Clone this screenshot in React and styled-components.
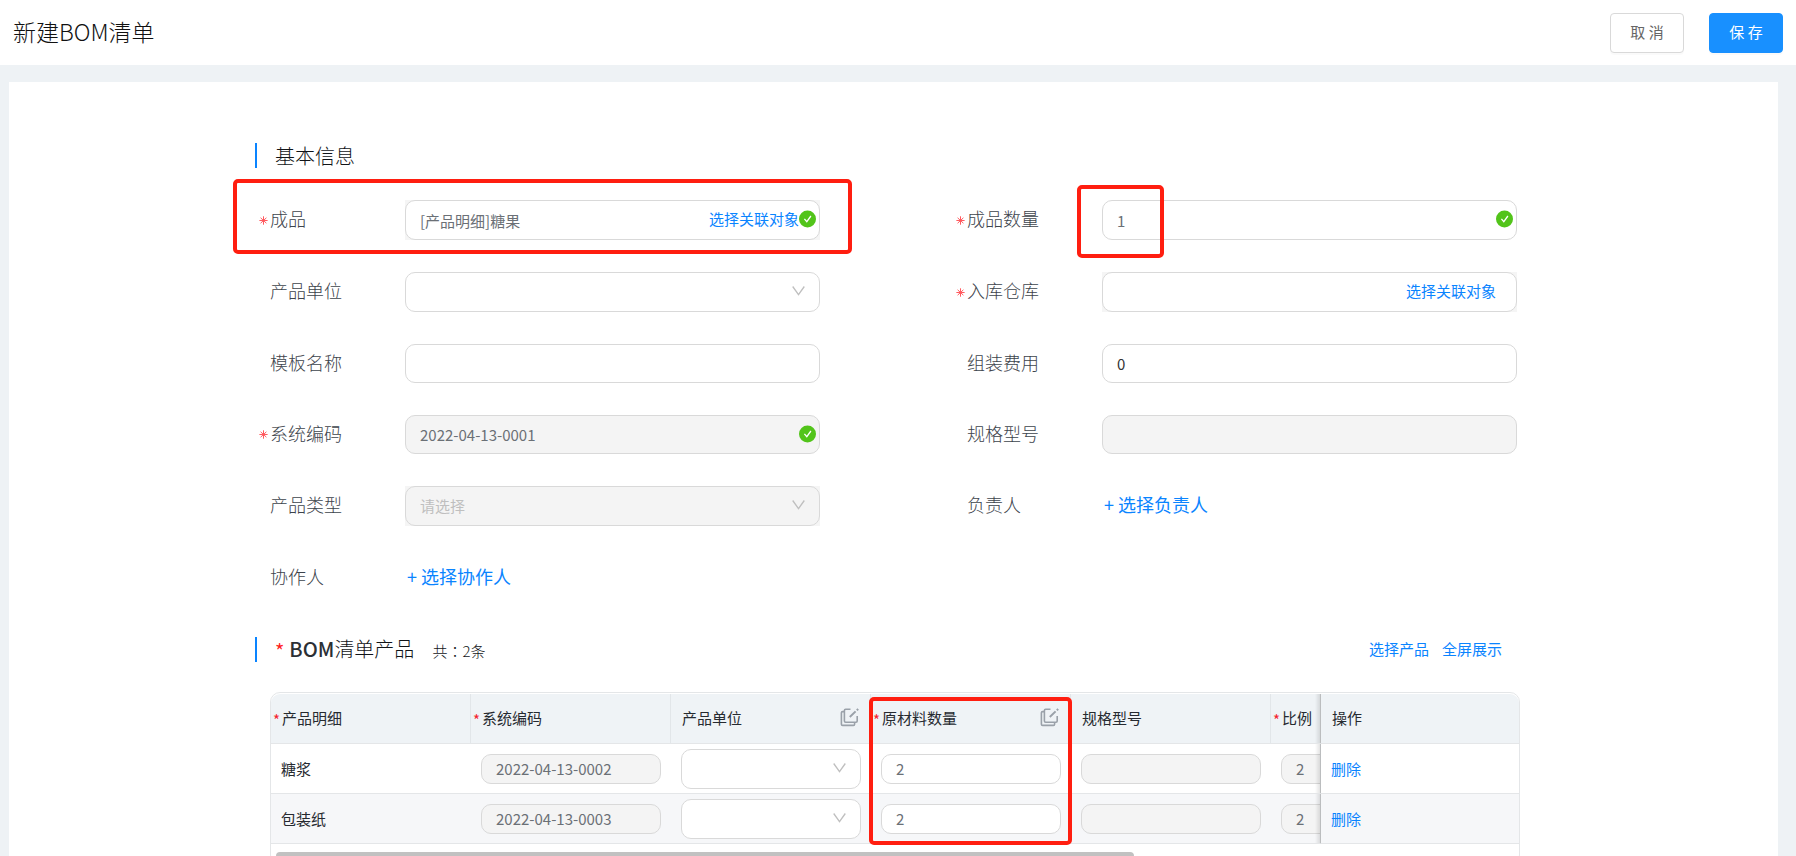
import React from 'react';
import styled, { createGlobalStyle } from 'styled-components';

const GlobalStyle = createGlobalStyle`
  *, *::before, *::after {
    box-sizing: border-box;
  }
  body {
    margin: 0;
    font-family: "Noto Sans CJK SC", sans-serif;
    font-weight: 400;
    font-size: 15px;
    color: #262a30;
  }
  button, input, select {
    font: inherit;
  }
`;

const Page = styled.div`
  height: 100vh;
  display: flex;
  flex-direction: column;
  background: #eef2f5;
`;

const TopBar = styled.header`
  flex: none;
  height: 65px;
  padding: 0 13px;
  display: flex;
  align-items: center;
  justify-content: space-between;
  background: #fff;
`;

const PageTitle = styled.h1`
  margin: 0;
  padding-bottom: 3px;
  font-size: 23px;
  font-weight: 300;
  color: #111;
`;

const Actions = styled.div`
  display: flex;
  gap: 25px;
`;

const Button = styled.button`
  width: 74px;
  height: 40px;
  padding: 0 0 2px;
  border: 1px solid ${props => (props.$primary ? '#1890ff' : '#d9d9d9')};
  border-radius: 4px;
  background: ${props => (props.$primary ? '#1890ff' : '#fff')};
  color: ${props => (props.$primary ? '#fff' : '#666')};
  box-shadow: 0 2px 0 rgba(0, 0, 0, 0.02);
  cursor: pointer;
`;

const Scroller = styled.main`
  flex: 1;
  min-height: 0;
  overflow-y: auto;
  scrollbar-width: none;
  padding: 17px 18px 0 9px;
`;

const Card = styled.div`
  padding: 61px 24px 40px;
  background: #fff;
`;

const Form = styled.form`
  max-width: 1277px;
  margin: 0 auto;
`;

const SectionHead = styled.div`
  height: 25px;
  padding: 0 18px;
  border-left: 2px solid #0a84ff;
  display: flex;
  align-items: center;
  justify-content: space-between;
`;

const SectionTitle = styled.h2`
  margin: 0;
  font-size: 20px;
  font-weight: 300;
  line-height: 25px;
  color: #111418;
`;

const Strong = styled.span`
  font-weight: 500;
  color: #2b2f35;
`;

const Count = styled.span`
  margin-left: 18px;
  font-size: 15px;
`;

// the TC face centres the full-width colon
const Colon = styled.span`
  font-family: "Noto Sans CJK TC", sans-serif;
`;

const HeadStar = styled.span`
  margin-right: 5px;
  vertical-align: -2px;
  font-weight: 400;
  color: #ff1f1f;
`;

const Links = styled.div`
  display: flex;
  gap: 13px;
  padding: 0 12px 2px 0;
`;

const Link = styled.a`
  color: #0a84ff;
  text-decoration: none;
`;

const AddLink = styled(Link)`
  padding: 0 0 4px 2px;
  font-size: 18px;
`;

const Fields = styled.div`
  display: grid;
  grid-template-columns: 1fr 1fr;
  gap: 32px 147px;
  margin: 32px 15px 39px;
`;

const Field = styled.div`
  position: relative;
  display: grid;
  grid-template-columns: 135px 1fr;
  align-items: center;
`;

const Label = styled.label`
  position: relative;
  padding-bottom: 4px;
  font-size: 18px;
  font-weight: 300;
  line-height: 26px;
  color: #3d444c;
`;

const LabelStar = styled.span`
  position: absolute;
  right: 100%;
  top: 2px;
  height: 26px;
  margin-right: 2px;
  display: flex;
  align-items: center;
`;

const Control = styled.div`
  position: relative;
  display: flex;
  align-items: center;
  min-height: ${props => (props.$tall ? 40 : 39)}px;
  background: ${props => (props.$backed ? '#f5f5f5' : 'transparent')};
`;

const TextBox = styled.input`
  width: 100%;
  height: ${props => (props.$small ? 30 : props.$tall ? 40 : 39)}px;
  padding: 0 14px;
  border: 1px solid #d9d9d9;
  border-radius: 10px;
  background: ${props => (props.disabled ? '#f4f4f4' : '#fff')};
  color: ${props => (props.$dark ? '#333' : '#6b7076')};
  outline: none;
`;

const SelectBox = styled.select`
  width: 100%;
  height: 40px;
  padding: 0 14px 2px;
  appearance: none;
  border: 1px solid #d9d9d9;
  border-radius: 10px;
  background: ${props => (props.disabled ? '#f4f4f4' : '#fff')};
  color: #bfbfbf;
  opacity: 1;
  outline: none;
`;

const ChevronSvg = styled.svg`
  position: absolute;
  right: 15px;
  top: 50%;
  margin-top: -6px;
  pointer-events: none;
`;

const PickLink = styled(Link)`
  position: absolute;
  right: 21px;
  padding-bottom: 4px;
`;

const CheckSvg = styled.svg`
  position: absolute;
  right: 4px;
  top: 10px;
`;

// red callout frames
const Mark = styled.div`
  position: absolute;
  border: 4px solid #ff1e10;
  border-radius: 5px;
  pointer-events: none;
  z-index: 3;
`;

const ProductMark = styled(Mark)`
  inset: -21px -32px -14px -37px;
`;

const AmountMark = styled(Mark)`
  left: 110px;
  top: -15px;
  width: 87px;
  height: 73px;
`;

const MaterialMark = styled(Mark)`
  left: 598px;
  top: 4px;
  width: 203px;
  height: 148px;
`;

const TableFrame = styled.div`
  position: relative;
  margin: 30px 12px 0 15px;
  padding-top: 1px;
  border: 1px solid #e4e6e8;
  border-radius: 10px;
`;

const TableScroll = styled.div`
  overflow-x: auto;
  scrollbar-width: none;
  border-radius: 9px 9px 0 0;
`;

const Table = styled.table`
  width: 1399px;
  table-layout: fixed;
  border-collapse: separate;
  border-spacing: 0;
`;

const HeadCell = styled.th`
  position: relative;
  width: ${props => (props.$last ? 199 : 200)}px;
  height: 50px;
  padding: 0 10px 2px 11px;
  border-right: 1px solid #e2e6e9;
  border-bottom: 1px solid #e4e6e8;
  background: #eff3f6;
  font-weight: 400;
  text-align: left;
`;

const CellStar = styled.span`
  position: absolute;
  left: 2px;
  margin-top: 2px;
  color: #f5222d;
`;

const EditSvg = styled.svg`
  position: absolute;
  right: 11px;
  top: 14px;
`;

const Row = styled.tr`
  background: ${props => (props.$striped ? '#f6f7f9' : '#fff')};
`;

const Cell = styled.td`
  height: 50px;
  padding: 0 10px;
  border-bottom: 1px solid #e4e6e8;
  background: inherit;
`;

const pinned = `
  position: sticky;
  right: 0;
  z-index: 2;
  border-right: 0;
  border-left: 1px solid #d4d6d8;

  &::before {
    content: '';
    position: absolute;
    top: 0;
    bottom: 0;
    right: 100%;
    width: 6px;
    background: linear-gradient(to right, rgba(0, 0, 0, 0), rgba(0, 0, 0, 0.13));
  }
`;

const PinnedHead = styled(HeadCell)`${pinned}`;
const PinnedCell = styled(Cell)`${pinned}`;

const ScrollTrack = styled.div`
  padding: 8px 5px 4px;
`;

const ScrollThumb = styled.div`
  width: 858px;
  max-width: 100%;
  height: 8px;
  border-radius: 4px;
  background: #c1c1c1;
`;

const Chevron = () => (
  <ChevronSvg width="13" height="10" viewBox="0 0 13 10" fill="none" stroke="#bfbfbf" strokeWidth="1.3">
    <path d="M0.7 0.5 L6.5 8.6 L12.3 0.5" />
  </ChevronSvg>
);

const Check = () => (
  <CheckSvg width="17" height="18" viewBox="0 0 17 18">
    <circle cx="8.5" cy="9" r="8.5" fill="#52c41a" />
    <path d="M5.4 8.8 L7.8 11.6 L11.9 6" fill="none" stroke="#fff" strokeWidth="1.3" />
  </CheckSvg>
);

const Star = () => (
  <LabelStar>
    <svg width="9" height="9" viewBox="0 0 9 9" stroke="#ff5a5f" strokeWidth="1">
      <path d="M4.5 0.3 V8.7 M0.4 4.5 H8.6 M1.6 1.8 L7.4 7.2 M7.4 1.8 L1.6 7.2" />
    </svg>
  </LabelStar>
);

const EditAll = () => (
  <EditSvg width="19" height="19" viewBox="0 0 19 19" fill="none" stroke="#9aa1a9" strokeWidth="1.6">
    <path d="M10.5 1.2 H5.6 Q4.4 1.2 4.4 2.4 V13 Q4.4 14.2 5.6 14.2 H16 Q17.2 14.2 17.2 13 V8" />
    <path d="M4.4 3.6 H2.6 Q1.4 3.6 1.4 4.8 V16.2 Q1.4 17.4 2.6 17.4 H13.4 Q14.6 17.4 14.6 16.2 V14.4" />
    <path d="M9.8 9 L15.6 3.4 M16.8 2.3 L18.2 1" strokeWidth="2" />
  </EditSvg>
);

const fields = [
  { id: 'product', label: '成品', required: true, value: '[产品明细]糖果', pick: true, valid: true, tall: true, mark: ProductMark },
  { id: 'amount', label: '成品数量', required: true, value: '1', valid: true, tall: true, mark: AmountMark },
  { id: 'unit', label: '产品单位', type: 'select' },
  { id: 'warehouse', label: '入库仓库', required: true, value: '', pick: true, tall: true },
  { id: 'template', label: '模板名称', value: '' },
  { id: 'cost', label: '组装费用', value: '0', dark: true },
  { id: 'code', label: '系统编码', required: true, value: '2022-04-13-0001', disabled: true, valid: true },
  { id: 'spec', label: '规格型号', value: '', disabled: true },
  { id: 'category', label: '产品类型', type: 'select', disabled: true, placeholder: '请选择' },
  { id: 'owner', label: '负责人', type: 'link', text: '+ 选择负责人' },
  { id: 'partner', label: '协作人', type: 'link', text: '+ 选择协作人' },
];

const columns = [
  { title: '产品明细', required: true },
  { title: '系统编码', required: true },
  { title: '产品单位', edit: true },
  { title: '原材料数量', required: true, edit: true },
  { title: '规格型号' },
  { title: '比例', required: true },
];

const rows = [
  { name: '糖浆', code: '2022-04-13-0002', amount: '2', ratio: '2' },
  { name: '包装纸', code: '2022-04-13-0003', amount: '2', ratio: '2' },
];

const FormField = ({ field }) => {
  const { id, label, type, required, mark: MarkFrame } = field;

  return (
    <Field>
      <Label htmlFor={id}>
        {required && <Star />}
        {label}
      </Label>
      {type === 'link' && (
        <Control $tall>
          <AddLink id={id} href="#">{field.text}</AddLink>
        </Control>
      )}
      {type === 'select' && (
        <Control $tall $backed={field.disabled}>
          <SelectBox id={id} disabled={field.disabled}>
            <option>{field.placeholder}</option>
          </SelectBox>
          <Chevron />
        </Control>
      )}
      {!type && (
        <Control $tall={field.tall} $backed={field.pick}>
          <TextBox id={id} defaultValue={field.value} disabled={field.disabled} $tall={field.tall} $dark={field.dark} />
          {field.pick && <PickLink href="#">选择关联对象</PickLink>}
          {field.valid && <Check />}
        </Control>
      )}
      {MarkFrame && <MarkFrame />}
    </Field>
  );
};

const ProductTable = () => (
  <TableFrame>
    <TableScroll>
      <Table>
        <thead>
          <tr>
            {columns.map(column => (
              <HeadCell key={column.title}>
                {column.required && <CellStar>*</CellStar>}
                {column.title}
                {column.edit && <EditAll />}
              </HeadCell>
            ))}
            <PinnedHead $last>操作</PinnedHead>
          </tr>
        </thead>
        <tbody>
          {rows.map((row, i) => (
            <Row key={row.code} $striped={i % 2 === 1}>
              <Cell>{row.name}</Cell>
              <Cell><TextBox $small disabled aria-label="系统编码" defaultValue={row.code} /></Cell>
              <Cell>
                <Control $tall>
                  <SelectBox aria-label="产品单位"><option></option></SelectBox>
                  <Chevron />
                </Control>
              </Cell>
              <Cell><TextBox $small aria-label="原材料数量" defaultValue={row.amount} /></Cell>
              <Cell><TextBox $small disabled aria-label="规格型号" /></Cell>
              <Cell><TextBox $small disabled aria-label="比例" defaultValue={row.ratio} /></Cell>
              <PinnedCell><Link href="#">删除</Link></PinnedCell>
            </Row>
          ))}
        </tbody>
      </Table>
    </TableScroll>
    <ScrollTrack><ScrollThumb /></ScrollTrack>
    <MaterialMark />
  </TableFrame>
);

export default function App() {
  return (
    <Page>
      <GlobalStyle />
      <TopBar>
        <PageTitle>新建BOM清单</PageTitle>
        <Actions>
          <Button type="button">取 消</Button>
          <Button type="button" $primary>保 存</Button>
        </Actions>
      </TopBar>
      <Scroller>
        <Card>
          <Form>
            <SectionHead>
              <SectionTitle>基本信息</SectionTitle>
            </SectionHead>
            <Fields>
              {fields.map(field => <FormField key={field.id} field={field} />)}
            </Fields>
            <SectionHead>
              <SectionTitle>
                <HeadStar>*</HeadStar>
                <Strong>BOM</Strong>清单产品
                <Count>共<Colon>：</Colon>2条</Count>
              </SectionTitle>
              <Links>
                <Link href="#">选择产品</Link>
                <Link href="#">全屏展示</Link>
              </Links>
            </SectionHead>
            <ProductTable />
          </Form>
        </Card>
      </Scroller>
    </Page>
  );
}
